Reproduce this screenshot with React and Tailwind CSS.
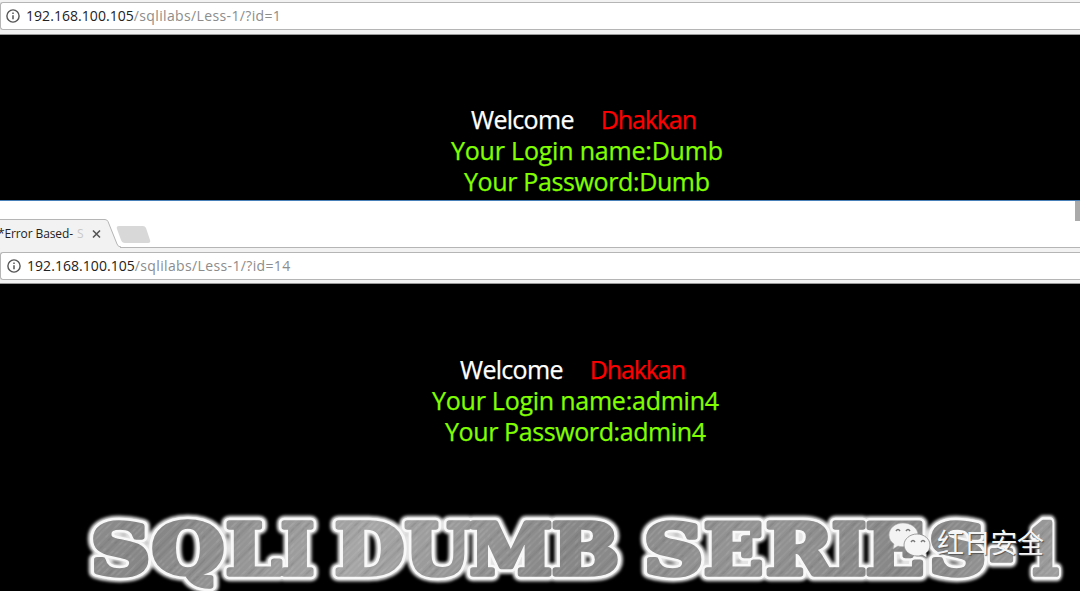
import React from "react";

const LETTERS = [
  ["S", 91, 59], ["Q", 152, 72], ["L", 226, 55], ["I", 281, 33],
  ["D", 335, 69], ["U", 405, 65], ["M", 470, 82], ["B", 552, 67],
  ["S", 644, 59], ["E", 704, 59], ["R", 766, 67], ["I", 832, 34],
  ["E", 866, 58], ["S", 929, 57], ["-", 989, 25], ["1", 1028, 34],
];

function InfoIcon() {
  return (
    <svg className="h-[14px] w-[14px] shrink-0" viewBox="0 0 14 14" fill="none" stroke="#555">
      <circle cx="7" cy="7" r="6.1" strokeWidth="1.4" />
      <path d="M7 6.2V10.3M7 3.6V5" strokeWidth="1.5" />
    </svg>
  );
}

function AddressBar({ id, second }) {
  return (
    <div
      className={
        second
          ? "flex h-[28px] shrink-0 items-center rounded-l-[3px] border border-r-0 border-[#b5b5b5] bg-white pl-[6px]"
          : "flex h-[28px] shrink-0 items-center rounded-l-[3px] border border-r-0 border-[#b5b5b5] bg-white pl-[5px]"
      }
    >
      <InfoIcon />
      <span className="ml-[6px] whitespace-nowrap font-['Open_Sans',sans-serif] text-[14px] leading-[20px] tracking-[0.36px] text-[#8c8c8c]">
        <span className="tracking-[0.05px] text-[#222]">192.168.100.105</span>/sqlilabs/Less-1/?id={id}
      </span>
    </div>
  );
}

function Line({ className, children }) {
  return <div className={"h-[31px] whitespace-pre leading-[31px] [-webkit-text-stroke:0.25px_currentColor] " + className}>{children}</div>;
}

function Glyphs(props) {
  return (
    <g fontFamily="'DejaVu Serif', serif" fontWeight="700" fontSize="69" strokeLinejoin="round" {...props}>
      {LETTERS.map(([ch, x, w], i) => (
        <text key={i} x={x} y="74" textLength={w} lengthAdjust="spacingAndGlyphs">{ch}</text>
      ))}
    </g>
  );
}

function Banner() {
  return (
    <svg className="block h-[91px] w-[1080px]" viewBox="0 0 1080 91">
      <defs>
        <linearGradient id="steel" x1="0" y1="0" x2="300" y2="160" gradientUnits="userSpaceOnUse" spreadMethod="reflect">
          <stop offset="0" stopColor="#949494" />
          <stop offset=".45" stopColor="#868686" />
          <stop offset="1" stopColor="#a6a6a6" />
        </linearGradient>
        <pattern id="brushed" width="41" height="41" patternUnits="userSpaceOnUse" patternTransform="rotate(45)">
          <path d="M2 0V41M13 0V41M19 0V41M34 0V41" stroke="#fff" strokeOpacity=".13" strokeWidth=".8" />
          <path d="M6 0V41M23 0V41M30 0V41" stroke="#444" strokeOpacity=".14" />
          <path d="M9 0V41M27 0V41M38 0V41" stroke="#fff" strokeOpacity=".2" strokeWidth=".5" />
        </pattern>
        <filter id="glow" x="0" y="-20" width="1080" height="130" filterUnits="userSpaceOnUse">
          <feGaussianBlur stdDeviation="1.5" />
        </filter>
      </defs>
      <Glyphs fill="#e4e4e4" stroke="#e4e4e4" strokeWidth="14.5" filter="url(#glow)" />
      <Glyphs fill="#f8f8f8" stroke="#f8f8f8" strokeWidth="10.5" />
      <Glyphs fill="url(#steel)" stroke="url(#steel)" strokeWidth="5.5" />
      <Glyphs fill="url(#brushed)" stroke="url(#brushed)" strokeWidth="5.5" />
    </svg>
  );
}

function Watermark() {
  return (
    <div className="absolute left-[888px] top-[20px] flex items-center">
      <svg className="h-[40px] w-[44px]" viewBox="0 0 44 40">
        <path d="M15 2C7 2 1 7.500 1 14c0 4 2 7 5 9l-1 5 5-3c2 .6 4 .8 7 .6C26 25 30 20 30 14 30 7 23 2 15 2Z" fill="#f3f3f3" stroke="#aaa" strokeWidth=".6" />
        <path d="M29 13c-7 0-13 5-13 11s6 11 13 11c2 0 4-.4 5-1l5 3-1-5c3-2 4-5 4-8 0-6-6-11-13-11Z" fill="#f5f5f5" stroke="#888" strokeWidth=".8" />
        <path d="M8 10q2-3 4 0M18 10q2-3 4 0M23 21q2-3 4 0M33 21q2-3 4 0" fill="none" stroke="#777" strokeWidth="1.4" />
      </svg>
      <span className="ml-[5px] mt-[3px] whitespace-nowrap font-['Noto_Sans_CJK_SC',sans-serif] text-[27px] leading-[38px] tracking-[-0.3px] text-[#f5f5f5] [text-shadow:1px_1px_1px_#555]">红日安全</span>
    </div>
  );
}

export default function App() {
  return (
    <div className="flex h-[591px] w-[1080px] flex-col overflow-hidden bg-black font-['Open_Sans',sans-serif]">
      <div className="h-[35px] shrink-0 border-b border-[#999] bg-[#f2f2f2] pt-[2px]">
        <AddressBar id="1" />
      </div>
      <div className="h-[165px] shrink-0 pt-[69px] text-[25px] text-[#80ff00]">
        <Line className="pl-[471px] tracking-[-0.7px] text-white">Welcome<span className="ml-[27px] tracking-[-1.1px] text-[#ff0000]">Dhakkan</span></Line>
        <Line className="pl-[451px] tracking-[-0.2px]">Your Login name:Dumb</Line>
        <Line className="pl-[464px] tracking-[-0.37px]">Your Password:Dumb</Line>
      </div>
      <div className="flex h-[47px] shrink-0 items-start justify-between border-t border-[#4a80b8] bg-white">
        <div className="flex items-start pt-[18px]">
          <svg className="h-[28px] w-[152px]" viewBox="0 0 152 28">
            <path d="M0 .5H105q2 0 3 2L117 25q1 3 4 3H0Z" fill="#f2f2f2" />
            <path d="M0 .5H105q2 0 3 2L117 25q1 3 4 3" fill="none" stroke="#b5b5b5" />
            <path d="M119 7H143q2 0 3 2l4 12q1 3-2 3H125q-3 0-4-3l-4-11q-1-3 2-3Z" fill="#d8d8d8" />
            <path d="M93 11.500l7 7m0-7l-7 7" stroke="#555" strokeWidth="1.600" />
            <text x="-2" y="19" fontSize="12" textLength="75" fontFamily="'Open Sans', sans-serif" fill="#222">*Error Based-</text>
            <text x="77" y="19" fontSize="12" fontFamily="'Open Sans', sans-serif" fill="#c8c8c8">S</text>
          </svg>
        </div>
        <div className="h-[20px] w-[5px] bg-[#aaa]" />
      </div>
      <div className="h-[37px] shrink-0 border-b border-[#999] bg-[#f2f2f2]">
        <div className="mb-[4px] ml-[120px] h-px bg-[#b5b5b5]" />
        <AddressBar id="14" second />
      </div>
      <div className="h-[216px] shrink-0 pt-[70px] text-[25px] text-[#80ff00]">
        <Line className="pl-[460px] tracking-[-0.7px] text-white">Welcome<span className="ml-[27px] tracking-[-1.1px] text-[#ff0000]">Dhakkan</span></Line>
        <Line className="pl-[432px] tracking-[-0.24px]">Your Login name:admin4</Line>
        <Line className="pl-[445px] tracking-[-0.4px]">Your Password:admin4</Line>
      </div>
      <div className="relative h-[91px] shrink-0">
        <Banner />
        <Watermark />
      </div>
    </div>
  );
}
